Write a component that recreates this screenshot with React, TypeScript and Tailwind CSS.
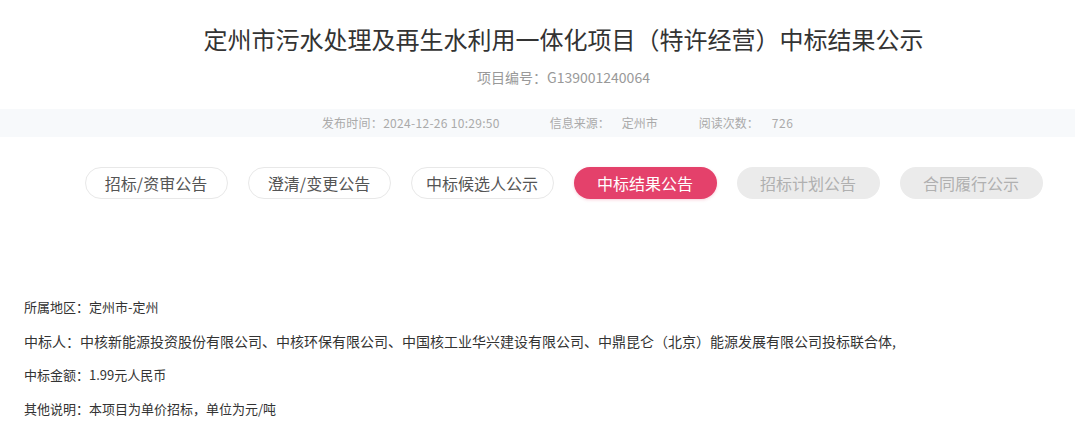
import React from "react";

const tabs = [
  { label: "招标/资审公告", kind: "normal" },
  { label: "澄清/变更公告", kind: "normal" },
  { label: "中标候选人公示", kind: "normal" },
  { label: "中标结果公告", kind: "active" },
  { label: "招标计划公告", kind: "disabled" },
  { label: "合同履行公示", kind: "disabled" },
];

export default function App() {
  return (
    <div
      className="w-[1075px] h-[427px] bg-white overflow-hidden"
      style={{ fontFamily: '"Microsoft YaHei", "Noto Sans CJK SC", "Noto Sans", sans-serif' }}
    >
      <div className="pl-[52px] pt-[23px]">
        <h1 className="text-center text-[24px] leading-[32px] text-[#333] font-normal">
          定州市污水处理及再生水利用一体化项目（特许经营）中标结果公示
        </h1>
        <div className="mt-[12px] text-center text-[14px] leading-[20px] text-[#999]">
          项目编号：G139001240064
        </div>
      </div>

      <div className="mt-[22px] h-[28px] bg-[#f7f9fb] pl-[40px] flex items-center justify-center text-[12px] text-[#aaa]">
        <span className="tracking-[0.3px]">发布时间：2024-12-26 10:29:50</span>
        <span className="ml-[50px]">信息来源：</span>
        <span className="ml-[12px]">定州市</span>
        <span className="ml-[41px]">阅读次数：</span>
        <span className="ml-[13px] tracking-[0.5px]">726</span>
      </div>

      <div className="mt-[30px] pl-[52px] flex justify-center gap-[20px]">
        {tabs.map((t) => (
          <div
            key={t.label}
            className={
              t.kind === "active"
                ? "w-[143px] h-[32px] rounded-full flex items-center justify-center text-[16px] bg-[#e4416b] text-white shadow-[0_1px_3px_rgba(228,65,107,0.25)]"
                : t.kind === "disabled"
                ? "w-[143px] h-[32px] rounded-full flex items-center justify-center text-[16px] bg-[#ebebeb] text-[#b0b0b0]"
                : "w-[143px] h-[32px] rounded-full flex items-center justify-center text-[16px] bg-white text-[#555] border border-[#e8e8e8]"
            }
          >
            {t.label}
          </div>
        ))}
      </div>

      <div className="mt-[91px] pl-[24px] text-[13px] leading-[34px] text-[#333]">
        <div>所属地区：定州市-定州</div>
        <div className="text-[14px]">
          中标人：中核新能源投资股份有限公司、中核环保有限公司、中国核工业华兴建设有限公司、中鼎昆仑（北京）能源发展有限公司投标联合体,
        </div>
        <div>中标金额：1.99元人民币</div>
        <div>其他说明：本项目为单价招标，单位为元/吨</div>
      </div>
    </div>
  );
}
